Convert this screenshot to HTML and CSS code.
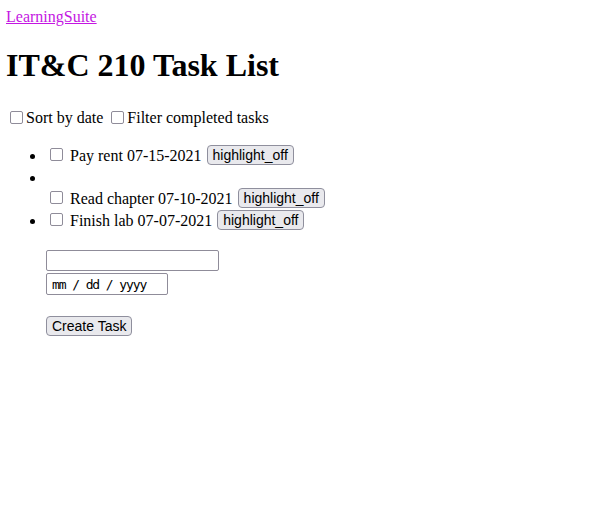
FILE: index.html
```html
<!DOCTYPE html>
<html>
<head>
<meta charset="utf-8">
<link rel="stylesheet" href="styles.css">
</head>
<body>
<a class="home-link" href="#">LearningSuite</a>
<h1 class="title">IT&amp;C 210 Task List</h1>
<div class="controls">
  <label class="ctl"><input type="checkbox" class="cb"><span>Sort by date</span></label>
  <label class="ctl"><input type="checkbox" class="cb"><span>Filter completed tasks</span></label>
</div>
<ul class="tasks">
  <li class="task"><input type="checkbox" class="cb"> Pay rent 07-15-2021 <button class="btn">highlight_off</button></li>
  <li class="task"><div class="task-spacer">&nbsp;</div><div class="task-block"><input type="checkbox" class="cb"> Read chapter 07-10-2021 <button class="btn">highlight_off</button></div></li>
  <li class="task"><input type="checkbox" class="cb"> Finish lab 07-07-2021 <button class="btn">highlight_off</button></li>
</ul>
<form class="new-task">
  <input type="text" class="text-in">
  <input type="text" class="date-in" placeholder="mm / dd / yyyy">
  <button type="button" class="btn create">Create Task</button>
</form>
</body>
</html>
```
FILE: styles.css
```css
body {
  margin: 8px 8px 8px 6px;
  font-family: "Liberation Serif", "Times New Roman", serif;
  font-size: 16px;
  color: #000;
}
.home-link {
  color: #c416e2;
  text-decoration: underline;
}
.title {
  font-size: 32px;
  font-weight: bold;
  margin: 21px 0 22px;
}
.controls {
  display: flex;
  align-items: center;
  gap: 4px;
  padding-top: 2px;
}
.ctl {
  display: inline-flex;
  align-items: center;
}
.cb {
  width: 13px;
  height: 13px;
  margin: 3px 3px 3px 4px;
  appearance: none;
  -webkit-appearance: none;
  border: 1.5px solid #8f8c99;
  border-radius: 2px;
  background: #fff;
  box-sizing: border-box;
  vertical-align: -2px;
}
.task .cb {
  vertical-align: -3px;
}
.tasks {
  margin: 18px 0 0;
  padding-left: 40px;
}
.task {
  line-height: 22px;
}
.task-spacer {
  height: 20px;
  line-height: 20px;
}
.task-block {
  line-height: 22px;
}
.btn {
  font-family: "Liberation Sans", Arial, sans-serif;
  font-size: 14px;
  background: #e9e9ed;
  border: 1px solid #8f8f9d;
  border-radius: 4px;
  padding: 1px 5px;
  color: #000;
  line-height: 16px;
  margin: 0 0 0 1px;
  vertical-align: 1px;
}
.new-task {
  display: flex;
  flex-direction: column;
  align-items: flex-start;
  margin: 18px 0 0 40px;
}
.text-in {
  width: 173px;
  height: 21px;
  box-sizing: border-box;
  border: 1px solid #8f8c99;
  border-radius: 2px;
  margin: 0 0 2px;
  padding: 1px 2px;
}
.date-in {
  width: 122px;
  height: 22px;
  box-sizing: border-box;
  border: 1px solid #8f8c99;
  border-radius: 2px;
  margin: 0;
  padding: 1px 5px;
  font-family: "DejaVu Sans Mono", monospace;
  font-size: 13px;
  letter-spacing: -1.1px;
}
.date-in::placeholder {
  color: #000;
}
.create {
  margin: 21px 0 0;
}
```
